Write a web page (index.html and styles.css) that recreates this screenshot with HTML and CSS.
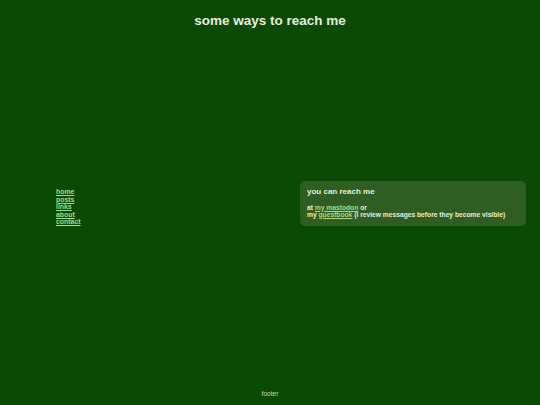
FILE: index.html
```html
<!DOCTYPE html>
<html>
<head>
<meta charset="utf-8">
<link rel="stylesheet" href="styles.css">
</head>
<body>
<div class="page">
  <header class="header"><h1 class="title">some ways to reach me</h1></header>
  <main class="main">
    <nav class="nav">
      <a href="#">home</a>
      <a href="#">posts</a>
      <a href="#">links</a>
      <a href="#">about</a>
      <a href="#">contact</a>
    </nav>
    <section class="card">
      <h2 class="card-title">you can reach me</h2>
      <p class="card-text">at <a href="#">my mastodon</a> or<br>my <a href="#">guestbook</a> (i review messages before they become visible)</p>
    </section>
  </main>
  <footer class="footer">footer</footer>
</div>
</body>
</html>
```
FILE: styles.css
```css
html, body {
  margin: 0;
  padding: 0;
  background: #0b4a04;
}
body {
  font-family: "Liberation Sans", Arial, sans-serif;
  color: #e4eedc;
}
.page {
  display: flex;
  flex-direction: column;
  height: 405px;
}
.header {
  text-align: center;
  padding-top: 12px;
}
.title {
  margin: 0;
  font-size: 13.5px;
  line-height: 18px;
  font-weight: bold;
}
.main {
  flex: 1;
  display: flex;
  align-items: center;
  padding-left: 56px;
  padding-right: 14px;
  padding-bottom: 14px;
}
.nav {
  display: flex;
  flex-direction: column;
  padding-top: 8px;
  font-size: 6.9px;
  line-height: 7.5px;
  font-weight: bold;
}
.nav a, .card a {
  color: #a8dc80;
}
.card {
  margin-left: auto;
  width: 212px;
  background: #2f5e22;
  border-radius: 5px;
  padding: 6px 7px 8px 7px;
}
.card-title {
  margin: 0 0 7px 0;
  font-size: 8px;
  line-height: 10px;
  font-weight: bold;
}
.card-text {
  margin: 0;
  font-size: 6.7px;
  line-height: 7px;
  font-weight: bold;
}
.footer {
  text-align: center;
  font-size: 6.6px;
  color: #c4d4ae;
  padding-bottom: 8px;
}
```
